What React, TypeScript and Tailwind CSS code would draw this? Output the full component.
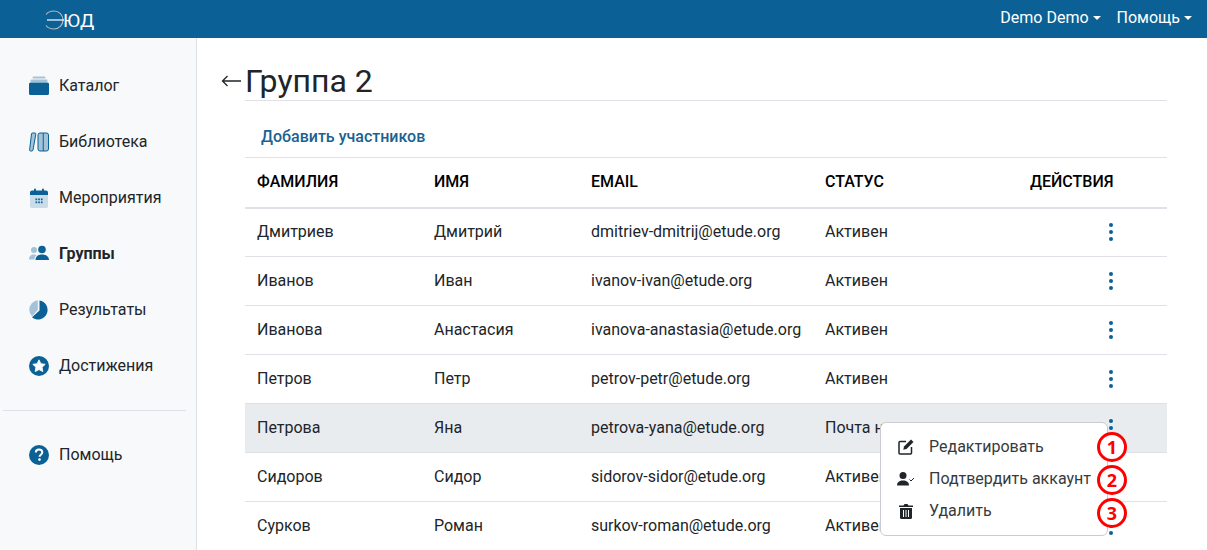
import React from "react";

const rows = [
  ["Дмитриев", "Дмитрий", "dmitriev-dmitrij@etude.org", "Активен"],
  ["Иванов", "Иван", "ivanov-ivan@etude.org", "Активен"],
  ["Иванова", "Анастасия", "ivanova-anastasia@etude.org", "Активен"],
  ["Петров", "Петр", "petrov-petr@etude.org", "Активен"],
  ["Петрова", "Яна", "petrova-yana@etude.org", "Почта не подтверждена"],
  ["Сидоров", "Сидор", "sidorov-sidor@etude.org", "Активен"],
  ["Сурков", "Роман", "surkov-roman@etude.org", "Активен"],
];

const B = "#0b6195";
const L = "#a5c3d8";

const ICat = () => (
  <svg width="20" height="20" viewBox="0 0 20 20">
    <rect x="3.500" y="0.500" width="13" height="2" rx="1" fill={L} />
    <rect x="1.500" y="3.500" width="17" height="2.500" rx="1" fill={L} />
    <path d="M1.500 6.500h17a1.500 1.500 0 0 1 1.500 1.500v9.500a1.500 1.500 0 0 1-1.500 1.500h-17A1.500 1.500 0 0 1 0 17.500V8a1.500 1.500 0 0 1 1.500-1.500z" fill={B} />
  </svg>
);
const ILib = () => (
  <svg width="20" height="20" viewBox="0 0 20 20">
    <path d="M3.500 1h2.500q1 0 .8 1.200L4 18q-.2 1-1.200 1H1.500q-1 0-.9-1.200L2.500 2q.1-1 1-1z" fill={L} stroke={B} strokeWidth="1" />
    <rect x="9" y="1" width="10.500" height="18" rx="2" fill={L} stroke={B} strokeWidth="1" />
    <path d="M14.250 1v18" stroke={B} strokeWidth="1" />
  </svg>
);
const ICal = () => (
  <svg width="20" height="20" viewBox="0 0 20 20">
    <path d="M1 7h18v11a2 2 0 0 1-2 2H3a2 2 0 0 1-2-2z" fill="#c9dce8" />
    <path d="M3 2.500h14a2 2 0 0 1 2 2V7H1V4.500a2 2 0 0 1 2-2z" fill={B} />
    <rect x="5" y="0.500" width="2" height="4" rx="1" fill={B} />
    <rect x="13" y="0.500" width="2" height="4" rx="1" fill={B} />
    {[6.500, 9.200, 11.900].map((x) => [10.500, 13.500].map((y) => <rect key={x + "-" + y} x={x} y={y} width="1.700" height="1.700" fill={B} />))}
  </svg>
);
const IGrp = () => (
  <svg width="20" height="20" viewBox="0 0 20 20">
    <circle cx="5" cy="6" r="3" fill={L} />
    <path d="M0 15.500c0-3.500 2-5 5-5 1 0 2 .2 2.700.7-1.500 1-2.200 2.500-2.400 4.300z" fill={L} />
    <circle cx="13" cy="5.500" r="3.800" fill={B} />
    <path d="M6.500 16c0-3.500 2.500-5.500 6.500-5.500s7 2 7 5.500z" fill={B} />
  </svg>
);
const IRes = () => (
  <svg width="20" height="20" viewBox="0 0 20 20">
    <path d="M8.800 0.300A9.500 9.500 0 0 0 0.300 10 9.500 9.500 0 0 0 3 16.300L8.800 10z" fill={L} />
    <path d="M10.500 0.500A9.500 9.500 0 1 1 3 17.200L10.500 10.500z" fill={B} />
  </svg>
);
const IAch = () => (
  <svg width="20" height="20" viewBox="0 0 20 20">
    <circle cx="10" cy="10" r="10" fill={B} />
    <path d="M10 3.800l1.900 3.900 4.300.6-3.100 3 .7 4.300L10 13.600l-3.800 2 .7-4.300-3.100-3 4.300-.6z" fill="#fff" stroke="#fff" strokeWidth="0.800" strokeLinejoin="round" />
  </svg>
);
const IHelp = () => (
  <svg width="20" height="20" viewBox="0 0 20 20">
    <circle cx="10" cy="10" r="10" fill={B} />
    <path d="M6.800 7.600c0-1.900 1.400-3.100 3.300-3.100s3.200 1.200 3.200 2.800c0 2.400-2.700 2.400-2.700 4.400" fill="none" stroke="#fff" strokeWidth="2" />
    <circle cx="10.500" cy="14.600" r="1.300" fill="#fff" />
  </svg>
);

const nav: [string, React.ReactNode, boolean][] = [
  ["Каталог", <ICat />, false],
  ["Библиотека", <ILib />, false],
  ["Мероприятия", <ICal />, false],
  ["Группы", <IGrp />, true],
  ["Результаты", <IRes />, false],
  ["Достижения", <IAch />, false],
];

function NavItem({ label, icon, bold }: { label: string; icon: React.ReactNode; bold?: boolean }) {
  return (
    <div className="flex h-14 items-center pl-[29px]">
      <span className="flex w-5 justify-center">{icon}</span>
      <span className={"ml-[10px] text-[16px] text-[#212529] " + (bold ? "font-bold" : "")}>{label}</span>
    </div>
  );
}

const Caret = () => <span className="ml-[4px] inline-block border-x-[4.500px] border-t-[4.500px] border-x-transparent border-t-white align-[3px]" />;

const Dots = () => (
  <div className="flex flex-col items-center gap-[3px]">
    <span className="h-1 w-1 rounded-full bg-[#0b6195]" />
    <span className="h-1 w-1 rounded-full bg-[#0b6195]" />
    <span className="h-1 w-1 rounded-full bg-[#0b6195]" />
  </div>
);

const Num = ({ n, cls }: { n: number; cls: string }) => (
  <span className={"absolute left-[216px] flex h-[30px] w-[30px] items-center justify-center rounded-full border-[3.500px] border-[#ff0000] bg-white font-['Open_Sans',sans-serif] text-[18px] font-bold text-[#ff0000] " + cls}>
    {n}
  </span>
);

function Menu() {
  return (
    <div className="absolute left-[880px] top-[422px] h-[114px] w-[228px] rounded-[6px] border border-[#c9ccd0] bg-white py-2">
      <div className="relative flex h-8 items-center">
        <svg className="ml-[17px]" width="16" height="16" viewBox="0 0 16 16">
          <path d="M8 2.500H2a1 1 0 0 0-1 1V14a1 1 0 0 0 1 1h10.500a1 1 0 0 0 1-1V8" fill="none" stroke="#212529" strokeWidth="1.500" />
          <path d="M13 .5l2.500 2.500-7 7-3.200.7.700-3.200z" fill="#212529" />
        </svg>
        <span className="ml-[15px] text-[16px] text-[#373a3c]">Редактировать</span>
        <Num n={1} cls="top-[1px]" />
      </div>
      <div className="relative flex h-8 items-center">
        <svg className="ml-[16px]" width="18" height="14" viewBox="0 0 18 14">
          <circle cx="6" cy="3.500" r="3.500" fill="#212529" />
          <path d="M0 13.500c0-3.500 2.500-5 6-5s6 1.500 6 5z" fill="#212529" />
          <path d="M12.500 7.500l1.500 1.500 3-3" fill="none" stroke="#212529" strokeWidth="1" />
        </svg>
        <span className="ml-[14px] text-[16px] text-[#373a3c]">Подтвердить аккаунт</span>
        <Num n={2} cls="top-[2px]" />
      </div>
      <div className="relative flex h-8 items-center">
        <svg className="ml-[18px]" width="14" height="16" viewBox="0 0 14 16">
          <path d="M0 2.500h4.500L5.500 1h3l1 1.500H14V4H0z" fill="#212529" />
          <path d="M1 5h12v9.500A1.500 1.500 0 0 1 11.500 16h-9A1.500 1.500 0 0 1 1 14.500z" fill="#212529" />
          <path d="M4.500 7v7M7 7v7M9.500 7v7" stroke="#fff" strokeWidth="1" />
        </svg>
        <span className="ml-[16px] text-[16px] text-[#373a3c]">Удалить</span>
        <Num n={3} cls="top-[3px]" />
      </div>
    </div>
  );
}

export default function App() {
  return (
    <div className="relative h-[550px] w-[1207px] overflow-hidden bg-white font-['Roboto',sans-serif] text-[#212529]">
      <header className="flex h-[38px] items-center justify-between bg-[#0b6195] pl-[45px] pr-[15px] text-white">
        <div className="flex h-full items-center pt-[1px]">
          <svg width="24" height="20" viewBox="0 0 24 20" aria-label="Э">
            <path d="M1 4.500C3 2 6 1 9 1c5 0 9 4 9 9s-4 9-9 9c-3 0-6-1-8-3.500" fill="none" stroke="#b3b6ba" strokeWidth="1.200" />
            <path d="M2 10h17" stroke="#ffffff" strokeWidth="1.200" />
          </svg>
          <span className="-ml-[6px] pt-[2px] text-[19px] font-normal leading-none tracking-[0.3px]">ЮД</span>
        </div>
        <div className="flex items-center gap-[16px] pb-[2px] text-[16px]">
          <span>Demo Demo<Caret /></span>
          <span>Помощь<Caret /></span>
        </div>
      </header>
      <div className="flex h-[512px]">
        <aside className="w-[197px] shrink-0 border-r border-[#dee2e6] bg-[#f8f9fa] pt-[20px]">
          {nav.map(([l, i, b]) => (
            <NavItem key={l} label={l} icon={i} bold={b} />
          ))}
          <div className="ml-[3px] mt-[16px] mb-[16px] w-[183px] border-t border-[#dee2e6]" />
          <NavItem label="Помощь" icon={<IHelp />} />
        </aside>
        <main className="flex-1 overflow-hidden pl-[48px] pr-[40px]">
          <div className="relative h-[63px] border-b border-[#dee2e6]">
            <span className="absolute -left-[24px] top-[36px]">
              <svg width="20" height="14" viewBox="0 0 20 14">
                <path d="M20 7H1.500M6.500 2L1.500 7l5 5" fill="none" stroke="#212529" strokeWidth="1.300" />
              </svg>
            </span>
            <h1 className="pt-[24px] text-[32px] font-normal leading-[38px]">Группа 2</h1>
          </div>
          <div className="flex h-[56px] items-center pl-4 pt-[16px] text-[16px] font-medium text-[#1a6291]">Добавить участников</div>
          <table className="w-[922px] table-fixed border-collapse text-[16px]">
            <colgroup>
              <col className="w-[177px]" />
              <col className="w-[157px]" />
              <col className="w-[234px]" />
              <col className="w-[205px]" />
              <col className="w-[149px]" />
            </colgroup>
            <thead>
              <tr className="h-[50px] border-y border-b-2 border-[#dee2e6] text-black">
                <th className="px-3 text-left font-medium uppercase">Фамилия</th>
                <th className="px-3 text-left font-medium uppercase">Имя</th>
                <th className="px-3 text-left font-medium uppercase">Email</th>
                <th className="px-3 text-left font-medium uppercase">Статус</th>
                <th className="px-3 text-left font-medium uppercase">Действия</th>
              </tr>
            </thead>
            <tbody>
              {rows.map((r, i) => (
                <tr key={r[0]} className={"h-[49px] border-b border-[#dee2e6] " + (i === 4 ? "bg-[#e9ecef]" : "")}>
                  {r.map((c, j) => (
                    <td key={j} className="overflow-hidden whitespace-nowrap px-3">{c}</td>
                  ))}
                  <td className="pr-[54px]">
                    <div className="flex justify-end"><Dots /></div>
                  </td>
                </tr>
              ))}
            </tbody>
          </table>
        </main>
      </div>
      <Menu />
    </div>
  );
}
